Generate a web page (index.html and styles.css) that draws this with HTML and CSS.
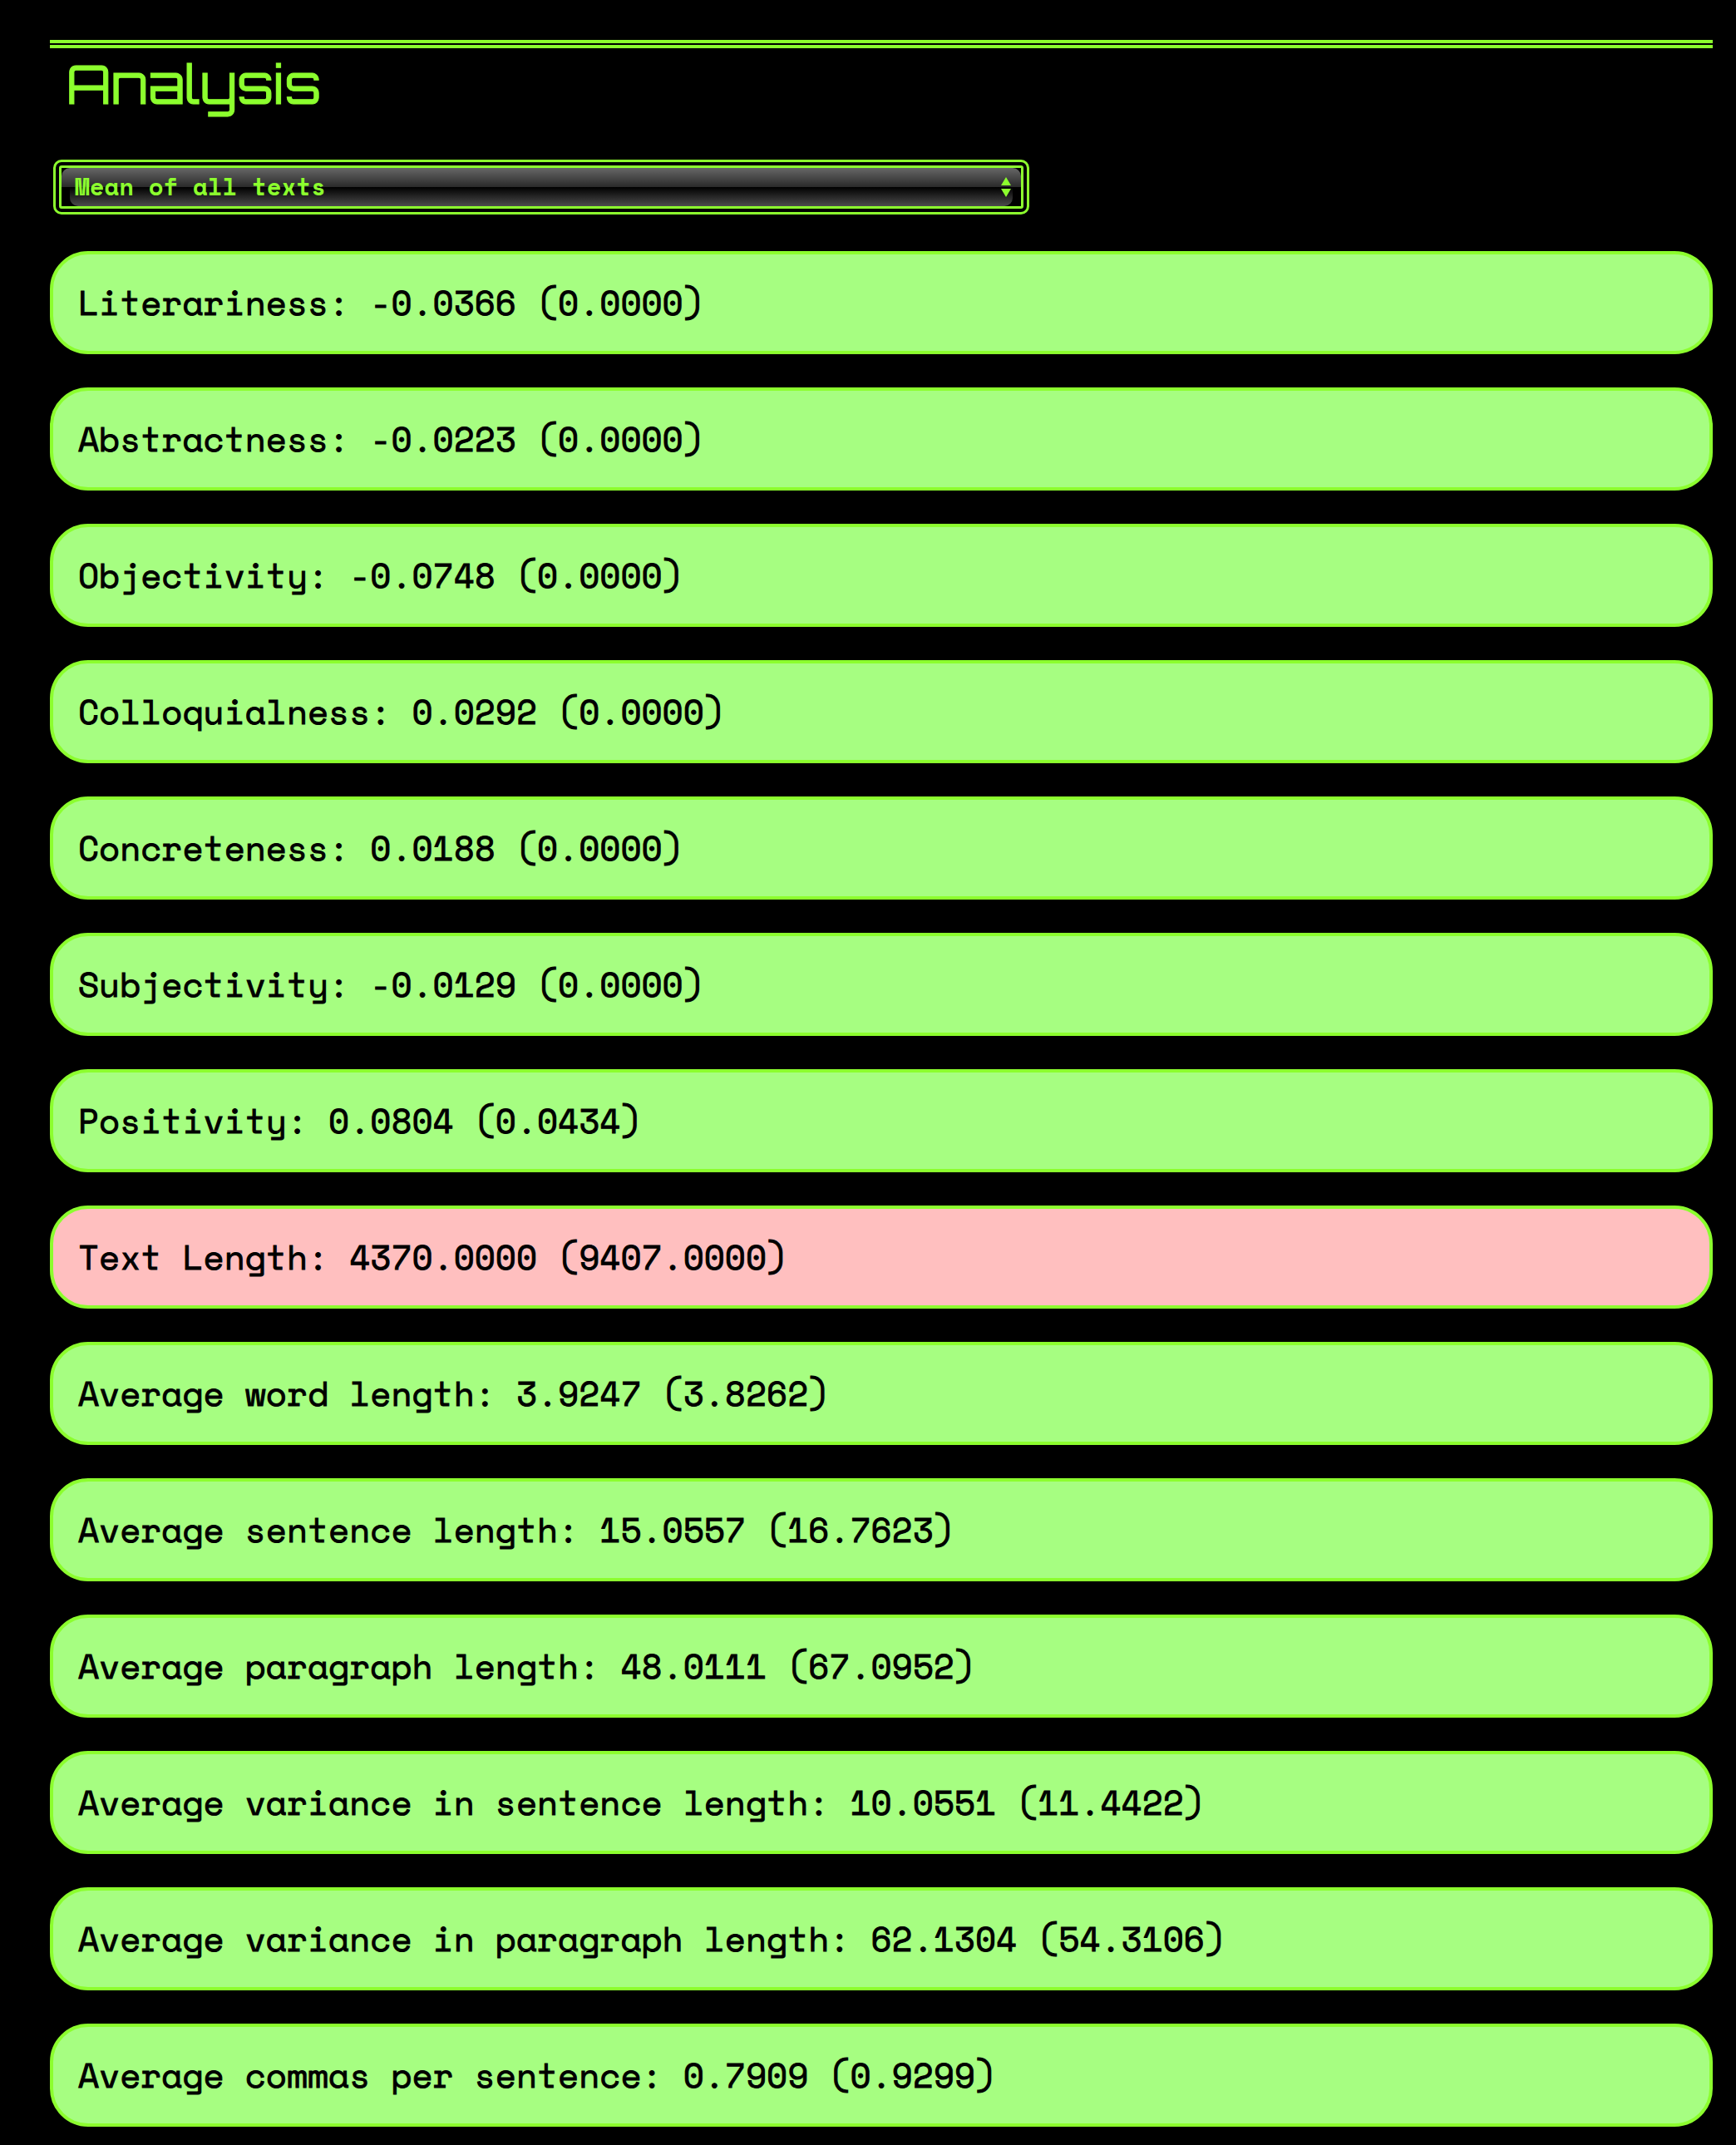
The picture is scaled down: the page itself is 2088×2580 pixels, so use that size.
FILE: index.html
```html
<!DOCTYPE html>
<html lang="en">
<head>
<meta charset="utf-8">
<meta name="viewport" content="width=device-width, initial-scale=1">
<title>Analysis</title>
<link rel="stylesheet" href="styles.css">
</head>
<body>
<main class="analysis">
  <hr class="rule">
  <h1 class="title">Analysis</h1>
  <div class="picker">
    <select class="picker-select" aria-label="Text to analyse">
      <option>Mean of all texts</option>
    </select>
    <svg class="picker-arrows" width="12" height="24" viewBox="0 0 12 24" aria-hidden="true">
      <path d="M6 0L12 10H0ZM0 14H12L6 24Z" fill="currentColor"/>
    </svg>
  </div>
  <ul class="metrics">
    <li class="metric">Literariness: -0.0366 (0.0000)</li>
    <li class="metric">Abstractness: -0.0223 (0.0000)</li>
    <li class="metric">Objectivity: -0.0748 (0.0000)</li>
    <li class="metric">Colloquialness: 0.0292 (0.0000)</li>
    <li class="metric">Concreteness: 0.0188 (0.0000)</li>
    <li class="metric">Subjectivity: -0.0129 (0.0000)</li>
    <li class="metric">Positivity: 0.0804 (0.0434)</li>
    <li class="metric metric-off">Text Length: 4370.0000 (9407.0000)</li>
    <li class="metric">Average word length: 3.9247 (3.8262)</li>
    <li class="metric">Average sentence length: 15.0557 (16.7623)</li>
    <li class="metric">Average paragraph length: 48.0111 (67.0952)</li>
    <li class="metric">Average variance in sentence length: 10.0551 (11.4422)</li>
    <li class="metric">Average variance in paragraph length: 62.1304 (54.3106)</li>
    <li class="metric">Average commas per sentence: 0.7909 (0.9299)</li>
  </ul>
</main>
</body>
</html>
```

FILE: styles.css
```css
:root {
  --neon: #8cfe2e;
  --good: #a6fe81;
  --off: #ffbfbf;
}

* {
  box-sizing: border-box;
}

body {
  margin: 0;
  padding: 48px 28px 22px 60px;
  background: #000;
  color: var(--neon);
  font-family: "Space Mono", "Liberation Mono", monospace;
}

/* Two 4px lines with a 2px gap */
.rule {
  height: 10px;
  margin: 0;
  border: 0 solid var(--neon);
  border-width: 4px 0;
}

.title {
  margin: 0;
  padding-left: 20px;
  font-family: Orbitron, "DejaVu Sans", sans-serif;
  font-size: 64px;
  font-weight: 400;
  line-height: 86px;
  -webkit-text-stroke: 1px currentColor;
}

.picker {
  position: relative;
  width: 58%;
  margin: 55px 0 51px 11px;
  border: 3px solid var(--neon);
  border-radius: 3px;
  outline: 3px solid var(--neon);
  outline-offset: 4px;
}

/* Glossy face: a full-width upper half over an inset lower half */
.picker::before,
.picker::after {
  content: "";
  position: absolute;
  height: 50%;
}

.picker::before {
  top: 0;
  left: 0;
  right: 0;
  border-radius: 10px 10px 0 0;
  background: linear-gradient(#666, #2a2a2a);
}

.picker::after {
  bottom: 0;
  left: 10px;
  right: 10px;
  border-radius: 0 0 10px 10px;
  background: linear-gradient(#000, #4c4c4c);
}

.picker-select {
  position: relative;
  z-index: 1;
  display: block;
  width: 100%;
  height: 46px;
  padding: 0 40px 2px 16px;
  border: 0;
  appearance: none;
  background: transparent;
  color: inherit;
  font: 700 29px/44px "Space Mono", "Liberation Mono", monospace;
}

.picker-arrows {
  position: absolute;
  z-index: 1;
  top: 11px;
  right: 12px;
  pointer-events: none;
}

.metrics {
  display: grid;
  gap: 40px;
  margin: 0;
  padding: 0;
  list-style: none;
}

.metric {
  padding: 30px;
  border: 4px solid var(--neon);
  border-radius: 46px;
  background: var(--good);
  color: #000;
  font-size: 41px;
  line-height: 56px;
  -webkit-text-stroke: 1px currentColor;
}

.metric-off {
  background: var(--off);
}
```
